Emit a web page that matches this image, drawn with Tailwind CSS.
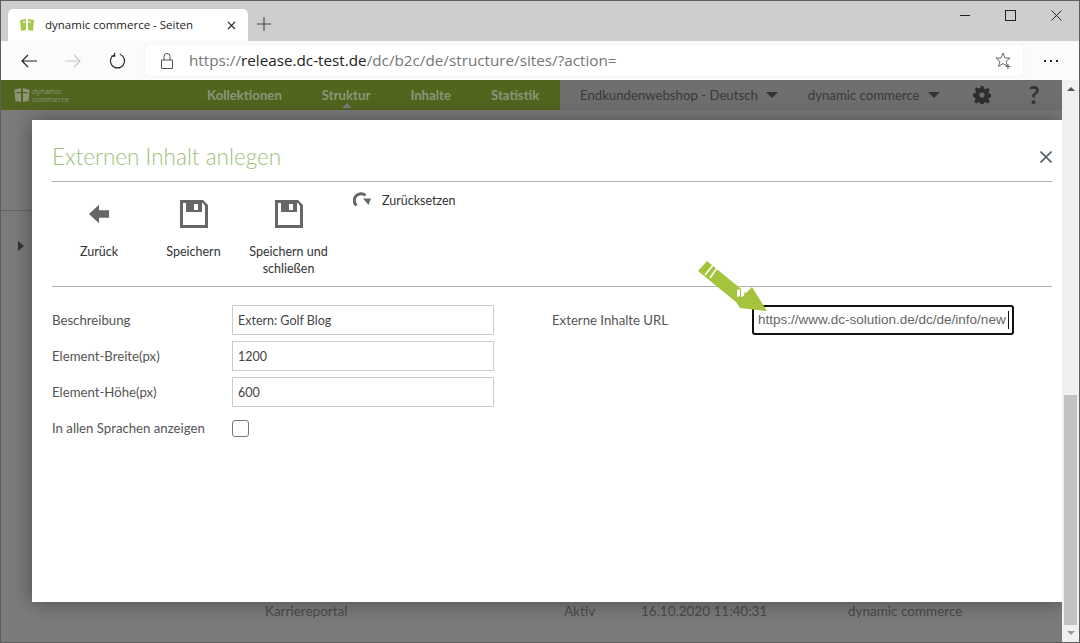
<!DOCTYPE html>
<html lang="de">
<head>
<meta charset="UTF-8">
<title>dynamic commerce - Seiten</title>
<script src="https://cdn.jsdelivr.net/npm/@tailwindcss/browser@4"></script>
</head>
<body class="h-[643px] w-[1080px] overflow-hidden bg-[#6e6e6e] font-['Lato',sans-serif]">
<div class="flex h-[643px] w-[1080px] flex-col border border-[#5e5e5e]">
  <!-- Browser tabs -->
  <div class="flex h-[40px] shrink-0 items-end bg-[#cecece] pl-[7px]">
    <div class="flex h-[32px] w-[240px] items-center rounded-t-[5px] bg-white pr-[12px] pl-[12px]">
      <svg class="h-[14px] w-[14px]" viewBox="0 0 14 14"><path d="M0 2l6-1v11l-5 1zM8 1l6 1-1 11-5-1z" fill="#a3c94a"/><path d="M3 4h8M7 1v12" stroke="#fff" stroke-width="1.2"/></svg>
      <span class="ml-[11px] flex-1 font-['Open_Sans',sans-serif] text-[11.5px] whitespace-nowrap text-[#222]">dynamic commerce - Seiten</span>
      <svg class="h-[9px] w-[9px]" viewBox="0 0 10 10"><path d="M1 1l8 8M9 1l-8 8" stroke="#222" stroke-width="1.4"/></svg>
    </div>
    <svg class="mb-[10px] ml-[9px] h-[14px] w-[14px]" viewBox="0 0 14 14"><path d="M7 0v14M0 7h14" stroke="#444" stroke-width="1.1"/></svg>
    <div class="ml-auto flex self-start pt-[9px] pr-[17px]">
      <svg class="mr-[35px] h-[11px] w-[11px]" viewBox="0 0 11 11"><path d="M1 5.5h10" stroke="#222" stroke-width="1"/></svg>
      <svg class="mr-[35px] h-[11px] w-[11px]" viewBox="0 0 11 11"><rect x=".5" y=".5" width="10" height="10" fill="none" stroke="#222"/></svg>
      <svg class="h-[11px] w-[11px]" viewBox="0 0 11 11"><path d="M.5.5l10 10M10.500.5l-10 10" stroke="#222"/></svg>
    </div>
  </div>
  <!-- Address bar -->
  <div class="flex h-[39px] shrink-0 items-center bg-[#fbfbfb]">
    <svg class="ml-[20px] h-[16px] w-[16px]" viewBox="0 0 16 16"><path d="M16 8H1M7 2L1 8l6 6" fill="none" stroke="#222" stroke-width="1.2"/></svg>
    <svg class="ml-[28px] h-[16px] w-[16px]" viewBox="0 0 16 16"><path d="M0 8h15M9 2l6 6-6 6" fill="none" stroke="#c8c8c8" stroke-width="1.2"/></svg>
    <svg class="ml-[28px] h-[17px] w-[17px]" viewBox="0 0 18 18"><path d="M11.500 2.300A7.500 7.500 0 1 1 6.500 2.300M6 .8v3.500h-3.500" fill="none" stroke="#222" stroke-width="1.200"/></svg>
    <div class="ml-[19px] flex h-[31px] w-[878px] items-center rounded-[4px] bg-white shadow-[0_0_2px_rgba(0,0,0,0.1)]">
      <svg class="ml-[16px] h-[16px] w-[12px]" viewBox="0 0 12 16"><path d="M.5 7h11v8.500H.5zM3 7V3.500a3 3 0 0 1 6 0V7" fill="none" stroke="#555"/></svg>
      <span class="ml-[16px] flex-1 font-['Open_Sans',sans-serif] text-[15.250px] whitespace-nowrap text-[#767676]">https://<span class="text-[#222]">release.dc-test.de</span>/dc/b2c/de/structure/sites/?action=</span>
      <svg class="mr-[11px] h-[17px] w-[17px]" viewBox="0 0 17 17"><path d="M8 1l2 5h5l-4 3.500 1.500 5L8 11.500 3.500 14.500 5 9.500 1 6h5z" fill="none" stroke="#666"/><path d="M13 12v5M10.500 14.500h5" stroke="#666"/></svg>
    </div>
    <div class="ml-[21px] flex gap-[4px]">
      <span class="h-[2px] w-[2px] bg-[#222]"></span><span class="h-[2px] w-[2px] bg-[#222]"></span><span class="h-[2px] w-[2px] bg-[#222]"></span>
    </div>
  </div>
  <!-- Page behind the dimmed backdrop -->
  <div class="relative flex-1 overflow-hidden bg-[#7b7b7b]">
    <div class="flex h-[30px] items-center bg-[#6f6f6f] pr-[17px]">
      <div class="flex h-full w-[559px] items-center bg-[#51651f]">
        <svg class="ml-[12px] h-[16px] w-[18px]" viewBox="0 0 18 17"><path d="M1 3l7-2v15l-6-1zM10 1l7 2-1 12-6 1z" fill="#8d9679"/><path d="M3 6h12M9 1v15" stroke="#51651f" stroke-width="1.500"/></svg>
        <div class="ml-[1px] font-['Open_Sans',sans-serif] text-[7.500px] leading-[8px] text-[#8d9679]">dynamic<br>commerce</div>
        <nav class="ml-[138px] flex gap-[40px] pt-px text-[13.200px] font-bold whitespace-nowrap text-[#8d9679]">
          <span>Kollektionen</span><span class="relative">Struktur<span class="absolute top-[17px] left-[20px] h-0 w-0 border-x-[5px] border-b-[5px] border-x-transparent border-b-[#7b7b7b]"></span></span><span>Inhalte</span><span>Statistik</span>
        </nav>
      </div>
      <span class="ml-[20px] pt-px text-[13.200px] whitespace-nowrap text-[#3a3a3a]">Endkundenwebshop - Deutsch</span>
      <span class="ml-[8px] h-0 w-0 border-x-[6px] border-t-[6px] border-x-transparent border-t-[#333]"></span>
      <span class="ml-[30px] pt-px text-[13.200px] whitespace-nowrap text-[#3a3a3a]">dynamic commerce</span>
      <span class="ml-[8px] h-0 w-0 border-x-[6px] border-t-[6px] border-x-transparent border-t-[#333]"></span>
      <svg class="ml-[33px] h-[18px] w-[18px]" viewBox="0 0 18 18"><path d="M7.500 0h3l.5 2.500 1.700.7 2.100-1.400 2 2-1.400 2.100.7 1.700 2.400.5v3l-2.400.5-.7 1.700 1.400 2.100-2 2-2.100-1.400-1.700.7-.5 2.400h-3l-.5-2.400-1.700-.7-2.100 1.400-2-2 1.400-2.100-.7-1.700L0 10.500v-3l2.400-.5.7-1.700L1.700 3.200l2-2 2.100 1.400 1.700-.7z" fill="#2e2e2e"/><circle cx="9" cy="9" r="2.600" fill="#6f6f6f"/></svg>
      <span class="ml-[38px] text-[24px] leading-none font-bold text-[#333]">?</span>
    </div>
    <div class="h-[100px] bg-[#7b7b7b]"></div>
    <div class="h-px bg-[#656565]"></div>
    <span class="absolute top-[161px] left-[17px] h-0 w-0 border-y-[5px] border-l-[6px] border-y-transparent border-l-[#333]"></span>
    <!-- Row behind the dialog -->
    <div class="absolute top-[521px] left-[264px] flex text-[13.500px] whitespace-nowrap text-[#4a4a4a]">
      <span class="w-[299px]">Karriereportal</span><span class="w-[77px]">Aktiv</span><span class="w-[207px]">16.10.2020 11:40:31</span><span>dynamic commerce</span>
    </div>
    <!-- Dialog -->
    <div class="absolute top-[40px] left-[31px] h-[482px] w-[1030px] bg-white pr-[10px] pl-[20px] shadow-[0_0_20px_rgba(0,0,0,0.4)]">
      <div class="flex h-[62px] items-center justify-between border-b border-[#b0b0b0] pt-[12px]">
        <h2 class="text-[22.500px] font-light text-[#9dc07a]">Externen Inhalt anlegen</h2>
        <svg class="h-[12px] w-[12px]" viewBox="0 0 12 12"><path d="M.5.500l11 11M11.500.5l-11 11" stroke="#55606a" stroke-width="1.600"/></svg>
      </div>
      <div class="relative flex h-[105px] border-b border-[#b0b0b0] text-center text-[12.500px] leading-[17px] text-[#333]">
        <div class="w-[94px] pt-[21px]">
          <svg class="mx-auto h-[22px] w-[22px]" viewBox="0 0 24 24"><path d="M1 12l11-10v6h11v8H12v6z" fill="#666"/></svg>
          <div class="mt-[18px]">Zurück</div>
        </div>
        <div class="w-[95px] pt-[18px]">
          <svg class="mx-auto h-[28px] w-[28px]" viewBox="0 0 28 28"><path fill-rule="evenodd" d="M0 0h23l5 5v23H0zM3 3v22h22V6l-2-3h-1v9H6V3zM14 4v6h4V4z" fill="#666"/></svg>
          <div class="mt-[15px]">Speichern</div>
        </div>
        <div class="w-[95px] pt-[18px]">
          <svg class="mx-auto h-[28px] w-[28px]" viewBox="0 0 28 28"><path fill-rule="evenodd" d="M0 0h23l5 5v23H0zM3 3v22h22V6l-2-3h-1v9H6V3zM14 4v6h4V4z" fill="#666"/></svg>
          <div class="mt-[15px]">Speichern und<br>schließen</div>
        </div>
        <div class="ml-[17px] flex h-fit items-center pt-[9px]">
          <svg class="h-[18px] w-[18px]" viewBox="0 0 18 18"><path d="M3.500 14.500A6.500 6.500 0 0 1 12.500 4.500" fill="none" stroke="#666" stroke-width="3"/><path d="M10 7.500h8L15.500 14z" fill="#666"/></svg>
          <span class="ml-[11px]">Zurücksetzen</span>
        </div>
      </div>
      <div class="flex pt-[18px] text-[13.200px] text-[#555]">
        <div class="w-[500px]">
          <div class="mb-[6px] flex h-[30px] items-center"><label class="w-[180px] pt-px">Beschreibung</label><input class="h-[30px] w-[262px] border border-[#ccc] px-[5px] text-[12.500px] text-[#444]" value="Extern: Golf Blog"></div>
          <div class="mb-[6px] flex h-[30px] items-center"><label class="w-[180px] pt-px">Element-Breite(px)</label><input class="h-[30px] w-[262px] border border-[#ccc] px-[5px] text-[12.500px] text-[#444]" value="1200"></div>
          <div class="mb-[6px] flex h-[30px] items-center"><label class="w-[180px] pt-px">Element-Höhe(px)</label><input class="h-[30px] w-[262px] border border-[#ccc] px-[5px] text-[12.500px] text-[#444]" value="600"></div>
          <div class="flex h-[30px] items-center"><label class="w-[180px] pt-px">In allen Sprachen anzeigen</label><span class="h-[17px] w-[17px] rounded-[3px] border border-[#777]"></span></div>
        </div>
        <div class="flex h-[30px] items-center">
          <label class="w-[200px] pt-px">Externe Inhalte URL</label>
          <div class="flex h-[30px] w-[262px] items-center overflow-hidden rounded-[3px] border-2 border-[#111] pl-[4px] font-['Liberation_Sans',sans-serif] text-[13.500px] whitespace-nowrap text-[#666]">https://www.dc-solution.de/dc/de/info/new<span class="ml-[2px] h-[18px] w-px shrink-0 bg-[#111]"></span></div>
        </div>
      </div>
    </div>
    <!-- Scrollbar -->
    <div class="absolute top-0 right-0 flex h-full w-[17px] flex-col items-center bg-[#f0f0f0]">
      <span class="mt-[7px] h-0 w-0 border-x-[4px] border-b-[4px] border-x-transparent border-b-[#555]"></span>
      <div class="mt-auto mb-[17px] h-[230px] w-[13px] bg-[#c2c2c2]"></div>
      <span class="absolute bottom-[7px] h-0 w-0 border-x-[4px] border-t-[4px] border-x-transparent border-t-[#999]"></span>
    </div>
    <!-- Arrow annotation -->
    <svg class="absolute top-[180px] left-[696px] h-[54px] w-[72px]" viewBox="0 0 72 54"><path d="M1 11L10 1l39 32 6-6 15 24-27-3-4-6z" fill="#a3c43c"/><path d="M8 15l8-10M13 18l7-10" stroke="#fff" stroke-width="1.500"/><path d="M40 30l3-1v7l-3 1zM44 29l4 1-1 6-3 1z" fill="#fff"/></svg>
  </div>
</div>
</body>
</html>
